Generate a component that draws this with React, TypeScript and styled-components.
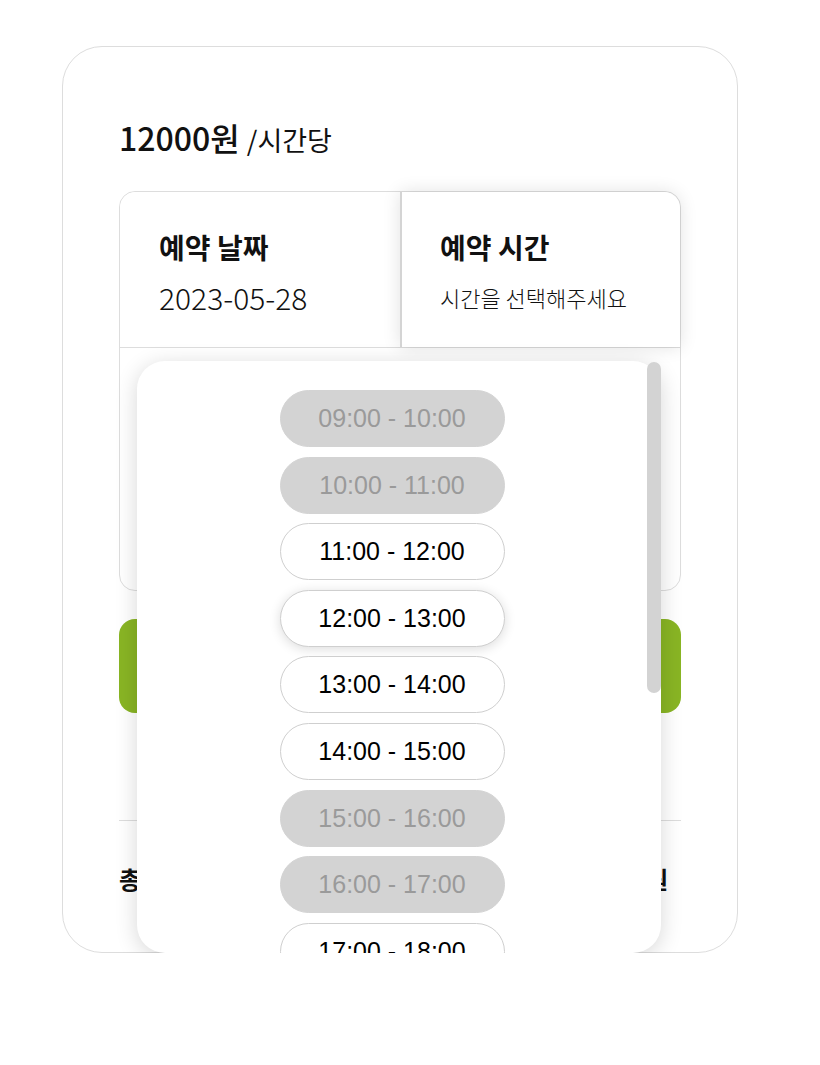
import styled, { createGlobalStyle } from "styled-components"

const GlobalStyle = createGlobalStyle`
  body {
    margin: 0;
    background: #fff;
    font-family: "Noto Sans CJK KR", "Noto Sans", sans-serif;
    color: #111;
  }
`;

const Card = styled.div`
  box-sizing: border-box;
  width: 676px;
  height: 907px;
  margin: 46px 0 0 62px;
  padding: 56px;
  border: 1px solid #ddd;
  border-radius: 40px;
`;

const Price = styled.h2`
  margin: 11px 0 28px;
  line-height: 46px;
  font-size: 32px;
  font-weight: 500;

  span {
    font-size: 27px;
    font-weight: 400;
  }
`;

const BookingBox = styled.div`
  position: relative;
  border: 1px solid #ddd;
  border-radius: 16px;
`;

const TopRow = styled.div`
  display: grid;
  grid-template-columns: 1fr 1fr;
  height: 155px;
  border-bottom: 1px solid #ddd;
`;

const Cell = styled.div<{ $active?: boolean }>`
  padding: 36px 0 0 ${(p) => (p.$active ? "38px" : "39px")};
  border-left: ${(p) => (p.$active ? "2px solid #d4d4d4" : "none")};
  border-radius: ${(p) => (p.$active ? "0 16px 0 0" : "16px 0 0 0")};
  box-shadow: ${(p) => (p.$active ? "0 0 18px rgba(0, 0, 0, 0.12)" : "none")};
  background: #fff;
`;

const CellTitle = styled.div`
  font-size: 28px;
  font-weight: 700;
  line-height: 38px;
`;

const CellValue = styled.div<{ $small?: boolean }>`
  margin-top: 12px;
  line-height: 38px;
  font-size: ${(p) => (p.$small ? "22px" : "30px")};
  font-weight: 300;
`;

const CalendarArea = styled.div`
  height: 242px;
`;

const DropdownFrame = styled.div`
  position: absolute;
  top: 169px;
  left: 17px;
  width: 524px;
  height: 592px;
  background: #fff;
  border-radius: 28px;
  box-shadow: 0 4px 22px rgba(0, 0, 0, 0.16);
  z-index: 5;
`;

const Scroller = styled.div`
  height: 100%;
  overflow: hidden;
  border-radius: 28px;
`;

const ScrollThumb = styled.div`
  position: absolute;
  top: 1px;
  right: 0;
  width: 14px;
  height: 331px;
  border-radius: 7px;
  background: #d3d3d3;
`;

const SlotList = styled.div`
  display: flex;
  flex-direction: column;
  align-items: center;
  padding: 29px 14px 30px 0;
`;

const Slot = styled.button<{ $off?: boolean; $hover?: boolean }>`
  box-sizing: border-box;
  width: 225px;
  height: 57px;
  margin-bottom: 9.6px;
  flex-shrink: 0;
  border-radius: 30px;
  border: 1px solid ${(p) => (p.$off ? "#d3d3d3" : "#cfcfcf")};
  background: ${(p) => (p.$off ? "#d3d3d3" : "#fff")};
  color: ${(p) => (p.$off ? "#9a9a9a" : "#000")};
  font-family: "Liberation Sans", Arial, sans-serif;
  font-size: 25px;
  box-shadow: ${(p) => (p.$hover ? "0 2px 12px rgba(0, 0, 0, 0.14)" : "none")};
  cursor: pointer;
`;

const ReserveButton = styled.button`
  display: block;
  width: 100%;
  height: 94px;
  margin-top: 28px;
  border: none;
  border-radius: 16px;
  background: #89b524;
  color: #fff;
  font-family: inherit;
  font-size: 24px;
  font-weight: 700;
`;

const Notice = styled.p`
  margin: 0;
  height: 107px;
  display: flex;
  align-items: center;
  justify-content: center;
  font-size: 16px;
  color: #777;
`;

const Divider = styled.hr`
  margin: 0;
  border: none;
  border-top: 1px solid #ddd;
`;

const TotalRow = styled.div`
  display: flex;
  justify-content: space-between;
  margin-top: 40px;
  padding-right: 13px;
  font-size: 24px;
  font-weight: 700;
  line-height: 36px;
`;

const slots = [
  ["09:00 - 10:00", true],
  ["10:00 - 11:00", true],
  ["11:00 - 12:00", false],
  ["12:00 - 13:00", false],
  ["13:00 - 14:00", false],
  ["14:00 - 15:00", false],
  ["15:00 - 16:00", true],
  ["16:00 - 17:00", true],
  ["17:00 - 18:00", false],
  ["18:00 - 19:00", false],
  ["19:00 - 20:00", false],
  ["20:00 - 21:00", false],
  ["21:00 - 22:00", false],
  ["22:00 - 23:00", false],
  ["23:00 - 24:00", false],
] as const;

const App = () => {
  return (<>
    <GlobalStyle />
    <Card>
      <Price>12000원 <span>/시간당</span></Price>

      <BookingBox>
        <TopRow>
          <Cell>
            <CellTitle>예약 날짜</CellTitle>
            <CellValue>2023-05-28</CellValue>
          </Cell>
          <Cell $active>
            <CellTitle>예약 시간</CellTitle>
            <CellValue $small>시간을 선택해주세요</CellValue>
          </Cell>
        </TopRow>
        <CalendarArea />

        <DropdownFrame>
          <Scroller>
            <SlotList>
              {slots.map(([label, off], i) => (
                <Slot key={i} $off={off} $hover={label === "12:00 - 13:00"}>{label}</Slot>
              ))}
            </SlotList>
          </Scroller>
          <ScrollThumb />
        </DropdownFrame>
      </BookingBox>

      <ReserveButton>예약하기</ReserveButton>
      <Notice>예약 확정 전에는 요금이 청구되지 않습니다</Notice>
      <Divider />
      <TotalRow>
        <span>총 합계</span>
        <span>0원</span>
      </TotalRow>
    </Card>
  </>)
}
export default App
